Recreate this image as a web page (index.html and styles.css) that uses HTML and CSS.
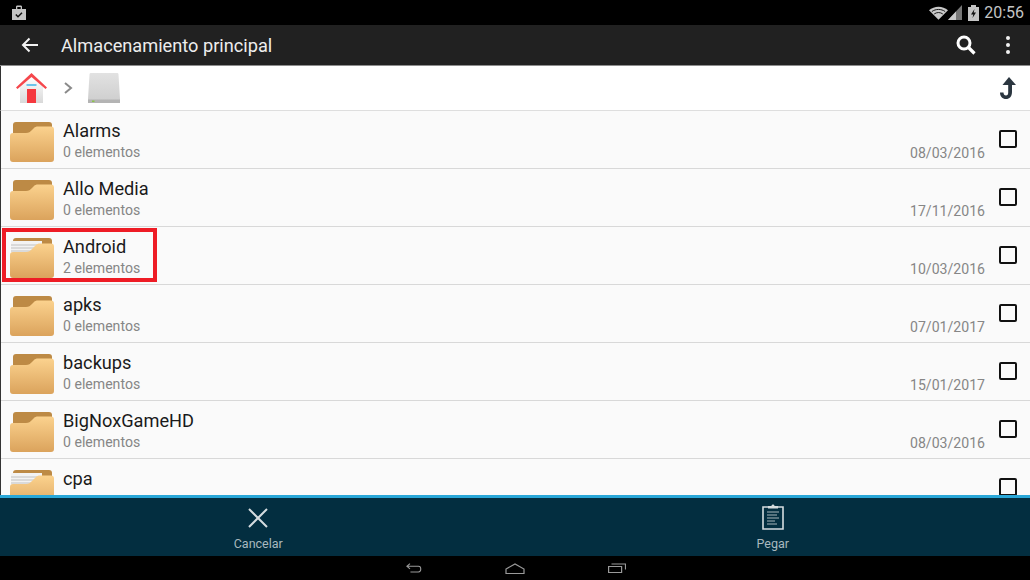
FILE: index.html
```html
<!DOCTYPE html>
<html lang="es">
	<head>
		<meta charset="UTF-8" />
		<title>Almacenamiento principal</title>
		<link rel="stylesheet" href="styles.css">
	</head>
	<body>
		<svg class="defs" width="0" height="0">
			<defs>
				<linearGradient id="folderFront" x1="0" y1="0" x2="0" y2="1">
					<stop offset="0" stop-color="#fbd28e" />
					<stop offset="1" stop-color="#dba35c" />
				</linearGradient>
				<linearGradient id="driveFace" x1="0" y1="0" x2="0" y2="1">
					<stop offset="0" stop-color="#e2e2e2" />
					<stop offset="1" stop-color="#cdcdcd" />
				</linearGradient>
				<linearGradient id="houseFace" x1="0" y1="0" x2="0" y2="1">
					<stop offset="0" stop-color="#fff" />
					<stop offset="1" stop-color="#d9d9d9" />
				</linearGradient>
				<symbol id="folder" viewBox="0 0 44 40">
					<path d="M3 8V3C3 1 4 0 6 0h33c2 0 3 1 3 3v11H3z" fill="#bd8a45" />
					<path d="M0 14c0-2 1-3 3-3h13c3 0 4-1 6-3l2-2c1-1 2-1.500 4-1.500h13c2 0 3 1 3 3V37c0 2-1 3-3 3H3c-2 0-3-1-3-3z" fill="url(#folderFront)" />
				</symbol>
				<symbol id="folderFull" viewBox="0 0 44 40">
					<path d="M3 8V3C3 1 4 0 6 0h33c2 0 3 1 3 3v11H3z" fill="#bd8a45" />
					<path d="M1 4.500c0-1 .6-1.500 1.500-1.500H32v3L22 17H1z" fill="#f3f3f3" />
					<path d="M1 7h28M1 10h25M1 13h22" stroke="#b4b4b4" stroke-width=".8" />
					<path d="M0 17c0-2 1-3 3-3h13c3 0 4-1 6-3l4-4c1-1 2-1.500 4-1.500h11c2 0 3 1 3 3V37c0 2-1 3-3 3H3c-2 0-3-1-3-3z" fill="url(#folderFront)" />
				</symbol>
			</defs>
		</svg>

		<div class="app">
			<div class="statusbar">
				<svg class="notif" width="16" height="16" viewBox="0 0 16 16">
					<path d="M1 4h14v11H1zM5 4V2c0-1 .5-1.500 1.500-1.500h3C10.500.5 11 1 11 2v2H9.700V2H6.300v2z" fill="#c4c4c4" />
					<path d="M4.800 9.500l2.200 2.200 4-4" fill="none" stroke="#111" stroke-width="1.500" />
				</svg>
				<div class="status-right">
					<svg width="19" height="14" viewBox="0 0 20 14">
						<path d="M0 4.200C5.500-1 14.500-1 20 4.200L10 14z" fill="#c9c9c9" />
						<path d="M3 5.500c4-3 10-3 14 0M5.500 8c2.700-2 6.300-2 9 0" fill="none" stroke="#111" stroke-width="1" />
					</svg>
					<svg width="14" height="15" viewBox="0 0 14 15">
						<path d="M0 15L14 0v15z" fill="#777" />
						<path d="M0 15l8-8.500V15z" fill="#c9c9c9" />
					</svg>
					<svg class="battery" width="11" height="16" viewBox="0 0 11 16">
						<path d="M0 2h3V0h5v2h3v14H0z" fill="#c4c4c4" />
						<path d="M6.500 4L3 9.500h2.300L4.500 13 8 7.500H5.700z" fill="#111" />
					</svg>
					<span class="clock">20:56</span>
				</div>
			</div>

			<div class="toolbar">
				<svg class="back" width="18" height="16" viewBox="0 0 18 16">
					<path d="M17 8H2M8.500 1.500L2 8l6.500 6.500" fill="none" stroke="#f2f2f2" stroke-width="2" />
				</svg>
				<span class="title">Almacenamiento principal</span>
				<svg class="search" width="20" height="20" viewBox="0 0 20 20">
					<circle cx="8" cy="8" r="6" fill="none" stroke="#fff" stroke-width="3" />
					<path d="M12 12l6.500 6.500" stroke="#fff" stroke-width="3.200" />
				</svg>
				<div class="dots"><i></i><i></i><i></i></div>
			</div>

			<div class="crumbs">
				<svg class="home" width="31" height="30" viewBox="0 0 31 30">
					<path d="M4 13L15.500 3 27 13v17H4z" fill="url(#houseFace)" />
					<path d="M0 14.500L15.500 0 31 14.500l-1.500 1.500L15.500 4 1.500 16z" fill="#f5474c" />
					<rect x="10.500" y="11" width="10" height="2" fill="#6cc3ea" />
					<rect x="11" y="16" width="9" height="14" fill="#f5383e" />
				</svg>
				<svg class="chevron" width="9" height="12" viewBox="0 0 9 12">
					<path d="M1 1l6 5-6 5" fill="none" stroke="#8a8a8a" stroke-width="2" />
				</svg>
				<svg class="drive" width="32" height="30" viewBox="0 0 32 30">
					<path d="M3 0h26c1 0 1.500.5 1.500 1.500L32 26v4H0v-4L1.500 1.500C1.500.5 2 0 3 0z" fill="url(#driveFace)" />
					<rect y="26.500" width="32" height="3.500" fill="#b4b4b4" />
					<rect x="4" y="27.500" width="2.500" height="1.500" fill="#8bc34a" />
				</svg>
				<svg class="up" width="16" height="22" viewBox="0 0 16 22">
					<path d="M9 0l7 8h-4v7c0 4.500-2.500 7-6 7s-6-2.500-6-6.500h3.500c0 2 1 3 2.500 3s2.200-1 2.200-3V8H2.500z" fill="#2b3640" />
				</svg>
			</div>

			<div class="list">
				<div class="row">
					<svg class="folder"><use href="#folder" /></svg>
					<div class="row-text">
						<div class="name">Alarms</div>
						<div class="meta">0 elementos</div>
					</div>
					<div class="date">08/03/2016</div>
					<div class="check"></div>
				</div>
				<div class="row">
					<svg class="folder"><use href="#folder" /></svg>
					<div class="row-text">
						<div class="name">Allo Media</div>
						<div class="meta">0 elementos</div>
					</div>
					<div class="date">17/11/2016</div>
					<div class="check"></div>
				</div>
				<div class="row">
					<svg class="folder"><use href="#folderFull" /></svg>
					<div class="row-text">
						<div class="name">Android</div>
						<div class="meta">2 elementos</div>
					</div>
					<div class="date">10/03/2016</div>
					<div class="check"></div>
				</div>
				<div class="row">
					<svg class="folder"><use href="#folder" /></svg>
					<div class="row-text">
						<div class="name">apks</div>
						<div class="meta">0 elementos</div>
					</div>
					<div class="date">07/01/2017</div>
					<div class="check"></div>
				</div>
				<div class="row">
					<svg class="folder"><use href="#folder" /></svg>
					<div class="row-text">
						<div class="name">backups</div>
						<div class="meta">0 elementos</div>
					</div>
					<div class="date">15/01/2017</div>
					<div class="check"></div>
				</div>
				<div class="row">
					<svg class="folder"><use href="#folder" /></svg>
					<div class="row-text">
						<div class="name">BigNoxGameHD</div>
						<div class="meta">0 elementos</div>
					</div>
					<div class="date">08/03/2016</div>
					<div class="check"></div>
				</div>
				<div class="row">
					<svg class="folder"><use href="#folderFull" /></svg>
					<div class="row-text">
						<div class="name">cpa</div>
					</div>
					<div class="check"></div>
				</div>
				<div class="highlight"></div>
			</div>

			<div class="actions">
				<div class="action">
					<svg class="action-x" width="22" height="22" viewBox="0 0 22 22">
						<path d="M2 2l18 18M20 2L2 20" stroke="#d5dcdf" stroke-width="2" />
					</svg>
					<span>Cancelar</span>
				</div>
				<div class="action">
					<svg class="action-paste" width="22" height="27" viewBox="0 0 22 27">
						<path d="M1 4h20v22H1z" fill="none" stroke="#d5dcdf" stroke-width="1.600" />
						<path d="M6 5V3h3.500c0-2 3-2 3 0H16v2.500H6z" fill="#d5dcdf" />
						<path d="M5 9h12M5 12h10M5 15h12M5 18h8M5 21h10" stroke="#a9b6bb" stroke-width="1" />
					</svg>
					<span>Pegar</span>
				</div>
			</div>

			<div class="navbar">
				<svg width="16" height="10" viewBox="0 0 18 11">
					<path d="M4.500 .5L1 3.500l3.500 3M1 3.500h13c3.500 0 3.500 6.500 0 6.500H5" fill="none" stroke="#9a9a9a" stroke-width="1.200" />
				</svg>
				<svg width="20" height="11" viewBox="0 0 20 11">
					<path d="M1 10.500V6l9-5 9 5v4.500z" fill="none" stroke="#9a9a9a" stroke-width="1.200" />
				</svg>
				<svg width="18" height="10" viewBox="0 0 18 10">
					<path d="M.6 3.500h13v6H.6zM3.500 1h14v5.500" fill="none" stroke="#9a9a9a" stroke-width="1.200" />
				</svg>
			</div>
		</div>
	</body>
</html>
```

FILE: styles.css
```css
:root {
	box-sizing: border-box;
}
*,
::before,
::after {
	box-sizing: inherit;
}
body {
	margin: 0;
	background-color: #000;
	font-family: Roboto, "Liberation Sans", sans-serif;
}
svg {
	display: block;
	flex: none;
}
.defs {
	position: absolute;
}
.app {
	display: flex;
	flex-direction: column;
	height: 580px;
	overflow: hidden;
}

.statusbar {
	display: flex;
	align-items: center;
	justify-content: space-between;
	height: 25px;
	padding: 0 6px 0 11px;
	background-color: #000;
}
.status-right {
	display: flex;
	align-items: center;
}
.battery {
	margin-left: 6px;
}
.clock {
	margin-left: 5px;
	color: #c4c4c4;
	font-size: 16px;
}

.toolbar {
	display: flex;
	align-items: center;
	height: 41px;
	padding-left: 21px;
	background-color: #212121;
	border-bottom: 1px solid #8d8d8d;
}
.title {
	margin-left: 22px;
	color: #ededed;
	font-size: 18.2px;
}
.search {
	margin-left: auto;
}
.dots {
	display: flex;
	flex-direction: column;
	gap: 3px;
	margin: 0 20px 0 30px;
}
.dots i {
	display: block;
	width: 4px;
	height: 4px;
	border-radius: 50%;
	background-color: #f2f2f2;
}

.crumbs {
	display: flex;
	align-items: center;
	height: 45px;
	padding: 0 14px 0 15px;
	background-color: #fff;
	border-left: 1px solid #333;
	border-bottom: 1px solid #dedede;
}
.chevron {
	margin-left: 17px;
}
.drive {
	margin-left: 15px;
}
.up {
	margin-left: auto;
}

.list {
	position: relative;
	flex: 1;
	overflow: hidden;
	background-color: #fafafa;
	border-left: 1px solid #333;
}
.row {
	display: flex;
	align-items: stretch;
	height: 58px;
	padding: 11px 13px 0 9px;
	border-bottom: 1px solid #d8d8d8;
}
.folder {
	width: 44px;
	height: 40px;
}
.row-text {
	flex: 1;
	margin: -3px 0 0 9px;
}
.name {
	color: #1a1a1a;
	font-size: 18.2px;
	line-height: 24px;
}
.meta {
	color: #868686;
	font-size: 14.1px;
	line-height: 18px;
}
.date {
	align-self: flex-start;
	margin-top: 22px;
	color: #868686;
	font-size: 14.1px;
	line-height: 18px;
}
.check {
	width: 18px;
	height: 18px;
	margin: 8px 0 0 14px;
	border: 2px solid #111;
	border-radius: 2px;
}
/* marca roja sobre la fila de Android */
.highlight {
	position: absolute;
	left: 1px;
	top: 117px;
	width: 155px;
	height: 54px;
	border: 4px solid #ee1c25;
}

.actions {
	display: flex;
	height: 61px;
	padding-left: 1px;
	background-color: #032e40;
	border-top: 3px solid #29a7d8;
}
.action {
	display: flex;
	flex: 1;
	flex-direction: column;
	align-items: center;
	justify-content: flex-end;
	gap: 5px;
	padding-bottom: 5px;
	color: #a9b9bf;
	font-size: 12.5px;
}
.action-x {
	margin-bottom: 2px;
}
.action-paste {
	margin-bottom: 1px;
}

.navbar {
	display: flex;
	align-items: center;
	justify-content: center;
	gap: 83px;
	height: 24px;
	padding-left: 2px;
	background-color: #000;
}
```
